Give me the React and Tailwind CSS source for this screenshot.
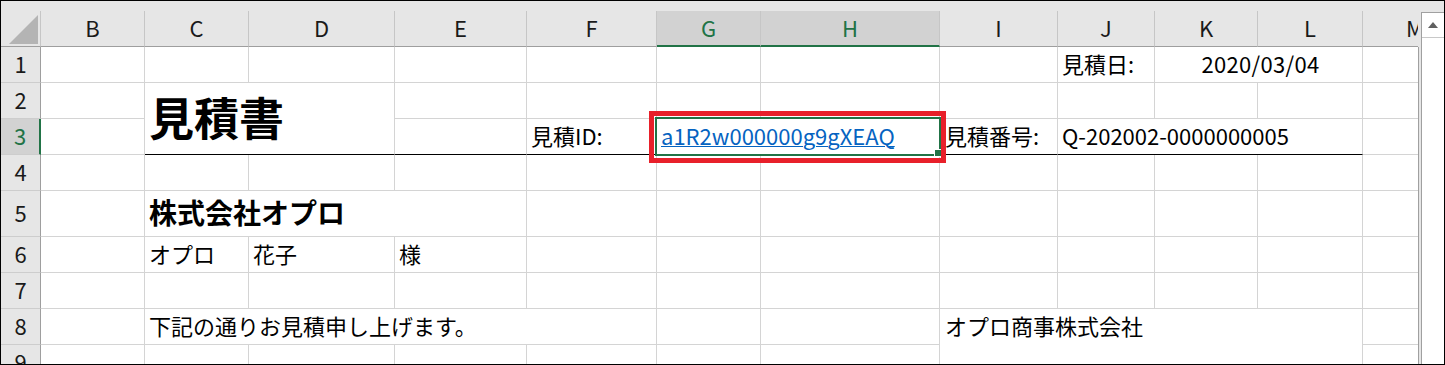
import React from "react";

function Cell({ children, className = "", under = false, last = false }) {
  return (
    <div
      className={
        "flex items-center pl-[4px] pb-[4px] whitespace-nowrap border-b " +
        (last ? "" : "border-r border-r-[#d4d4d4] ") +
        (under ? "border-b-black " : "border-b-[#d4d4d4] ") +
        className
      }
    >
      {children}
    </div>
  );
}

function ColHead({ children, sel = false, last = false }) {
  return (
    <div
      className={
        "flex items-center justify-center pb-[3px] " +
        (last ? "" : "border-r border-r-[#c6c6c6] ") +
        (sel
          ? "bg-[#d2d2d2] text-[#217346] border-b-2 border-b-[#217346]"
          : "bg-[#e6e6e6] text-[#1a1a1a] border-b border-b-[#9e9e9e]")
      }
    >
      {children}
    </div>
  );
}

function RowHead({ children, sel = false }) {
  return (
    <div
      className={
        "flex items-center justify-center pb-[3px] border-b border-b-[#cdcdcd] " +
        (sel
          ? "bg-[#d2d2d2] text-[#217346] border-r-2 border-r-[#217346]"
          : "bg-[#e6e6e6] text-[#1a1a1a] border-r border-r-[#9e9e9e]")
      }
    >
      {children}
    </div>
  );
}

function Blanks({ n, under = false }) {
  return (
    <>
      {Array.from({ length: n }).map((_, i) => (
        <Cell key={i} under={under} />
      ))}
    </>
  );
}

export default function App() {
  const letters = ["B", "C", "D", "E", "F", "G", "H", "I", "J", "K", "L"];
  return (
    <div className="relative w-[1445px] h-[365px] border border-black bg-white flex overflow-hidden font-['Noto_Sans_CJK_JP',sans-serif] text-[22px] leading-none text-black">
      {/* main sheet area */}
      <div className="w-[1417px] h-full flex flex-col overflow-hidden shrink-0">
        <div className="h-[10px] bg-[#e6e6e6] shrink-0" />
        <div className="grid grid-cols-[40px_104px_104px_146px_132px_130px_104px_179px_118px_97px_103px_105px_104px] grid-rows-[36px_36px_36px_36px_36px_46px_36px_36px_36px_36px] w-[1466px]">
          {/* header row */}
          <div className="bg-[#e6e6e6] border-r border-r-[#c6c6c6] border-b border-b-[#9e9e9e] flex items-end justify-end pr-[2px] pb-[2px]">
            <svg width="29" height="29" viewBox="0 0 29 29">
              <polygon points="0,29 29,29 29,0" fill="#b4b4b4" />
            </svg>
          </div>
          {letters.map((l) => (
            <ColHead key={l} sel={l === "G" || l === "H"}>
              {l}
            </ColHead>
          ))}
          <ColHead last>M</ColHead>

          {/* row 1 */}
          <RowHead>1</RowHead>
          <Blanks n={8} />
          <Cell>見積日:</Cell>
          <Cell className="col-span-2 justify-center pl-0 tracking-[0.3px]">2020/03/04</Cell>
          <Cell last />

          {/* row 2 */}
          <RowHead>2</RowHead>
          <Cell />
          <Cell under className="col-span-2 row-span-2 text-[45px] font-bold">
            見積書
          </Cell>
          <Blanks n={8} />
          <Cell last />

          {/* row 3 */}
          <RowHead sel>3</RowHead>
          <Cell />
          <Cell under />
          <Cell under>見積ID:</Cell>
          <Cell under className="col-span-2">
            <span className="text-[#0563c1] underline decoration-1 underline-offset-[1px]">
              a1R2w000000g9gXEAQ
            </span>
          </Cell>
          <Cell under className="pl-[5px]">見積番号:</Cell>
          <Cell under className="col-span-3">Q-202002-0000000005</Cell>
          <Cell last />

          {/* row 4 */}
          <RowHead>4</RowHead>
          <Blanks n={11} />
          <Cell last />

          {/* row 5 */}
          <RowHead>5</RowHead>
          <Cell />
          <Cell className="col-span-3 text-[28px] font-bold">株式会社オプロ</Cell>
          <Blanks n={7} />
          <Cell last />

          {/* row 6 */}
          <RowHead>6</RowHead>
          <Cell />
          <Cell>オプロ</Cell>
          <Cell>花子</Cell>
          <Cell>様</Cell>
          <Blanks n={7} />
          <Cell last />

          {/* row 7 */}
          <RowHead>7</RowHead>
          <Blanks n={11} />
          <Cell last />

          {/* row 8 */}
          <RowHead>8</RowHead>
          <Cell />
          <Cell className="col-span-4">下記の通りお見積申し上げます。</Cell>
          <Cell />
          <Cell />
          <Cell className="col-span-4 row-span-2 items-start pl-[5px] pb-0">
            <div className="h-[35px] pb-[4px] flex items-center">オプロ商事株式会社</div>
          </Cell>
          <Cell last />

          {/* row 9 */}
          <RowHead>9</RowHead>
          <Blanks n={7} />
          <Cell last />
        </div>
      </div>

      {/* right frame + vertical scrollbar */}
      <div className="flex-1 flex bg-[#e6e6e6]">
        <div className="w-[3px] flex flex-col">
          <div className="h-[46px] shrink-0" />
          <div className="flex-1 border-l border-l-[#a0a0a0]" />
        </div>
        <div className="flex-1 flex flex-col pt-[11px]">
          <div className="flex-1 flex flex-col bg-white border-l border-t border-[#a0a0a0]">
            <div className="h-[25px] border-b border-b-[#c8c8c8] flex items-center justify-center">
              <svg width="10" height="6" viewBox="0 0 10 6">
                <polygon points="0,6 10,6 5,0" fill="#606060" />
              </svg>
            </div>
            <div className="flex-1" />
          </div>
        </div>
      </div>

      {/* selection border */}
      <div className="absolute left-[654px] top-[116px] w-[286px] h-[39px] border-2 border-[#217346]" />
      <div className="absolute left-[933px] top-[148px] w-[8px] h-[8px] bg-[#217346] border border-white" />
      {/* red annotation */}
      <div className="absolute left-[648px] top-[110px] w-[297px] h-[52px] border-[5px] border-[#e8202a]" />
    </div>
  );
}
